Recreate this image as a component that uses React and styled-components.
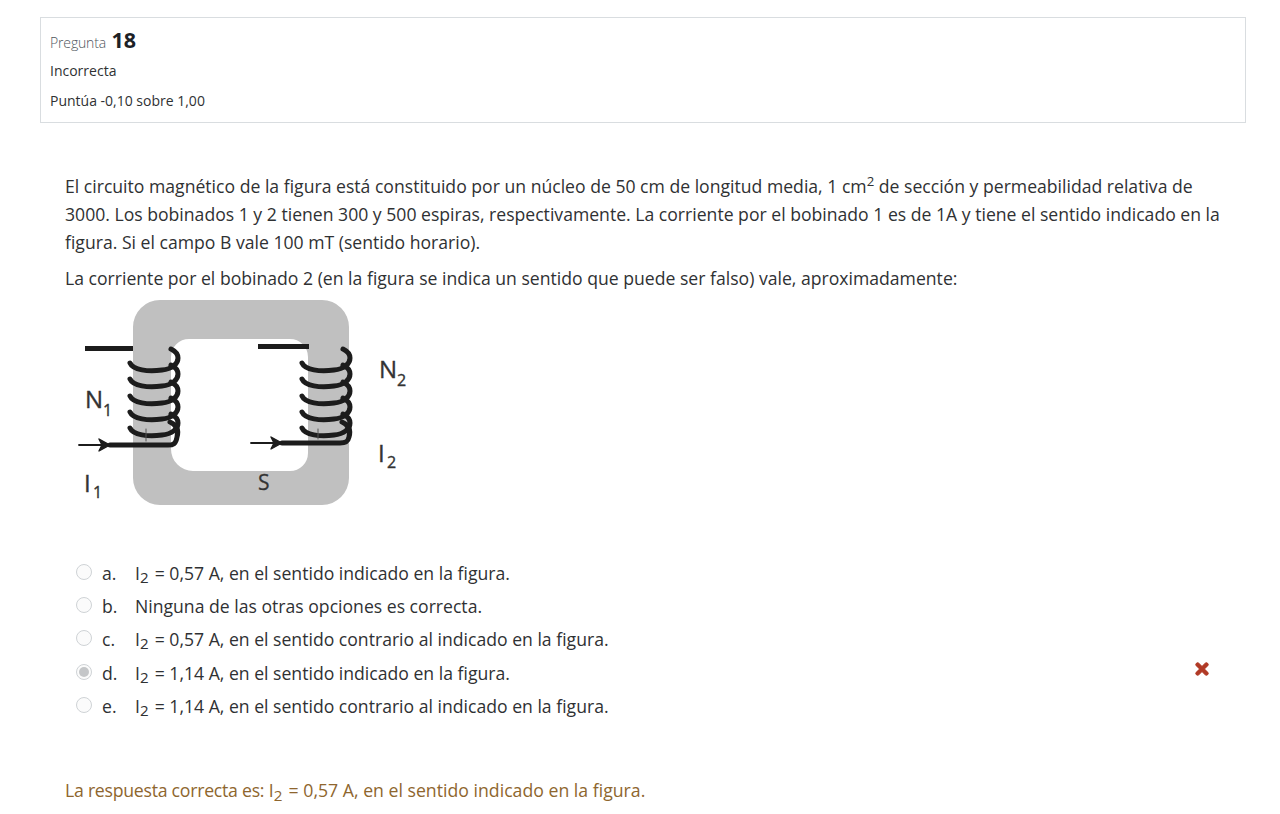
import React from 'react'
import styled, { createGlobalStyle } from 'styled-components'
import { FaTimes } from 'react-icons/fa'

const GlobalStyle = createGlobalStyle`
  html, body {
    margin: 0;
    padding: 0;
    background: #fff;
    overflow: hidden;
  }
  body {
    font-family: 'Open Sans', 'Noto Sans', sans-serif;
    color: #2f3133;
  }
  sub, sup {
    line-height: 0;
    font-size: 0.75em;
  }
  sub {
    font-size: 0.86em;
    vertical-align: -0.2em;
    margin-right: 1.5px;
  }
`

const Page = styled.div`
  width: 1280px;
  height: 814px;
  padding: 17px 34px 0 40px;
  box-sizing: border-box;
`

const InfoCard = styled.div`
  height: 106px;
  box-sizing: border-box;
  border: 1px solid #d9dde0;
  padding: 8px 9px;
  font-size: 14px;
  color: #2f3133;
`

const QuestionNo = styled.h3`
  margin: 0;
  height: 30px;
  font-size: 14px;
  letter-spacing: -0.15px;
  font-weight: 300;
  color: #4f565c;
  line-height: 28px;

  & b {
    font-size: 21.5px;
    font-weight: 700;
    letter-spacing: 0;
    color: #1d2125;
    margin-left: 2px;
  }
`

const InfoLine = styled.div`
  height: 30px;
  line-height: 30px;
`

const Content = styled.div`
  padding: 49px 10px 0 25px;
  font-size: 17.62px;
  line-height: 28px;
`

const Paragraph = styled.p`
  margin: 0 0 8px;
`

const Figure = styled.svg`
  display: block;
  width: 370px;
  height: 225px;
  margin: -10px 0 0 -5px;
`

const Options = styled.div`
  margin-top: 41px;
  padding-left: 11px;
`

const Option = styled.div`
  display: flex;
  align-items: center;
  height: 33.3px;
`

const Radio = styled.span`
  position: relative;
  flex: none;
  width: 16px;
  height: 16px;
  box-sizing: border-box;
  border: 1px solid #cfd3d6;
  border-radius: 50%;
  background: #fbfbfb;
  margin-right: 10px;
  margin-top: -2px;

  &::after {
    content: '';
    display: ${props => (props.$checked ? 'block' : 'none')};
    position: absolute;
    inset: 2px;
    border-radius: 50%;
    background: #c4c6c8;
  }
`

const Letter = styled.span`
  flex: none;
  width: 33px;
`

const OptionText = styled.span`
  flex: 1;
`

const WrongMark = styled(FaTimes)`
  color: #b13a26;
  font-size: 18px;
  stroke: currentColor;
  stroke-width: 30px;
  margin-right: 25px;
  margin-top: -8px;
`

const Feedback = styled.div`
  margin-top: 54px;
  color: #8e662e;
  font-size: 17.7px;
`

const FeedbackLead = styled.span`
  letter-spacing: -0.26px;
`

const coilYs = [73, 89, 106, 122, 138]

const Coil = ({ dx, wireY }) => (
  <g fill="none" stroke="#1c1c1c" strokeLinecap="round" strokeLinejoin="round" transform={`translate(${dx} 0)`}>
    <g strokeWidth="5">
      {coilYs.map(y => (
        <path key={y} d={`M70 ${y} C73 ${y + 7} 88 ${y + 9} 102 ${y + 7} C112 ${y + 6} 118 ${y + 1} 118 ${y - 5} C118 ${y - 9} 115 ${y - 12} 111 ${y - 14}`} />
      ))}
      <path d={`M110 132 C117 135 119 140 117 147 C116 ${wireY - 1} 113 ${wireY} 108 ${wireY} L50 ${wireY}`} />
    </g>
    <path d={`M19 ${wireY} L50 ${wireY}`} strokeWidth="1.8" />
    <path d={`M39 ${wireY - 6} L50 ${wireY} L39 ${wireY + 6} L42 ${wireY} Z`} fill="#1c1c1c" strokeWidth="1.4" />
    <path d={`M86 139 L86 ${wireY - 4}`} stroke="#555" strokeWidth="1" />
  </g>
)

const Label = ({ x, y, sx, sy, name, index }) => (
  <g fill="#333" stroke="#333" strokeWidth="0.35" fontFamily="'Open Sans', sans-serif">
    <text x={x} y={y} fontSize="24">{name}</text>
    <text x={sx} y={sy} fontSize="16">{index}</text>
  </g>
)

const MagneticCircuit = () => (
  <Figure viewBox="0 0 370 225">
    <path
      fillRule="evenodd"
      fill="#c0c0c0"
      d="M100 10 H262 A27 27 0 0 1 289 37 V188 A27 27 0 0 1 262 215 H100 A27 27 0 0 1 73 188 V37 A27 27 0 0 1 100 10 Z M129 49 H230 A18 18 0 0 1 248 67 V163 A18 18 0 0 1 230 181 H133 A22 22 0 0 1 111 159 V67 A18 18 0 0 1 129 49 Z"
    />
    <rect x="25" y="56" width="48" height="5" fill="#1c1c1c" />
    <rect x="198" y="54" width="51" height="5" fill="#1c1c1c" />
    <Coil dx={0} wireY={155} />
    <Coil dx={172} wireY={153} />
    <Label x={25} y={118} sx={43} sy={126} name="N" index="1" />
    <Label x={319} y={88} sx={337} sy={96} name="N" index="2" />
    <Label x={24} y={202} sx={33} sy={208} name="I" index="1" />
    <Label x={318} y={172} sx={327} sy={178} name="I" index="2" />
    <text x={198} y={200} fontSize="21" fill="#333" stroke="#333" strokeWidth="0.3" fontFamily="'Open Sans', sans-serif">S</text>
  </Figure>
)

const options = [
  { letter: 'a.', text: <span>I<sub>2</sub> = 0,57 A, en el sentido indicado en la figura.</span> },
  { letter: 'b.', text: 'Ninguna de las otras opciones es correcta.' },
  { letter: 'c.', text: <span>I<sub>2</sub> = 0,57 A, en el sentido contrario al indicado en la figura.</span> },
  { letter: 'd.', text: <span>I<sub>2</sub> = 1,14 A, en el sentido indicado en la figura.</span>, checked: true, wrong: true },
  { letter: 'e.', text: <span>I<sub>2</sub> = 1,14 A, en el sentido contrario al indicado en la figura.</span> },
]

const App = () => (
  <Page>
    <GlobalStyle />
    <InfoCard>
      <QuestionNo>Pregunta <b>18</b></QuestionNo>
      <InfoLine>Incorrecta</InfoLine>
      <InfoLine>Puntúa -0,10 sobre 1,00</InfoLine>
    </InfoCard>
    <Content>
      <Paragraph>
        El circuito magnético de la figura está constituido por un núcleo de 50 cm de longitud media, 1 cm<sup>2</sup> de sección y permeabilidad relativa de 3000. Los bobinados 1 y 2 tienen 300 y 500 espiras, respectivamente. La corriente por el bobinado 1 es de 1A y tiene el sentido indicado en la figura. Si el campo B vale 100 mT (sentido horario).
      </Paragraph>
      <Paragraph>
        La corriente por el bobinado 2 (en la figura se indica un sentido que puede ser falso) vale, aproximadamente:
      </Paragraph>
      <MagneticCircuit />
      <Options>
        {options.map(o => (
          <Option key={o.letter}>
            <Radio $checked={o.checked} />
            <Letter>{o.letter}</Letter>
            <OptionText>{o.text}</OptionText>
            {o.wrong && <WrongMark />}
          </Option>
        ))}
      </Options>
      <Feedback>
        <FeedbackLead>La respuesta correcta es:</FeedbackLead> I<sub>2</sub> = 0,57 A, en el sentido indicado en la figura.
      </Feedback>
    </Content>
  </Page>
)

export default App
